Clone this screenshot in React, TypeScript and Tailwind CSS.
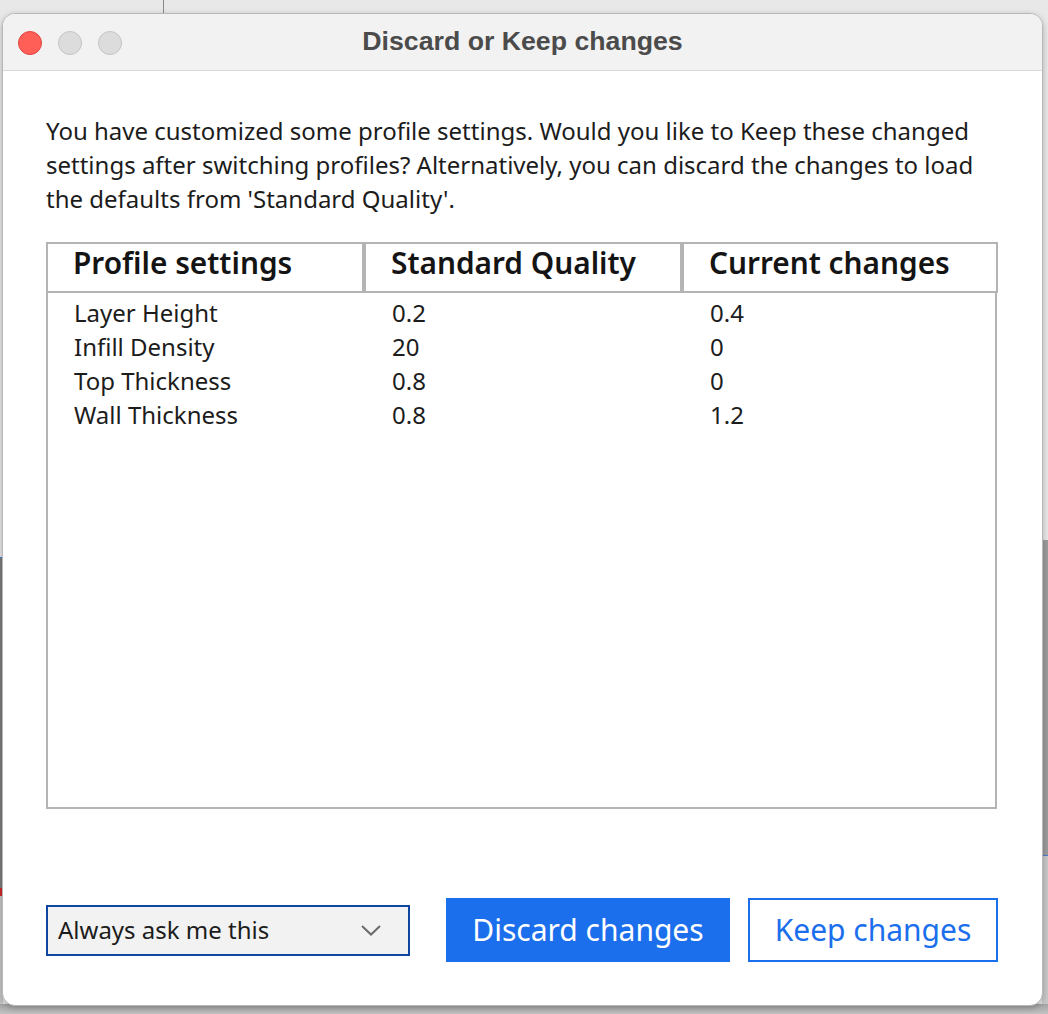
import React from "react";

const rows = [
  ["Layer Height", "0.2", "0.4"],
  ["Infill Density", "20", "0"],
  ["Top Thickness", "0.8", "0"],
  ["Wall Thickness", "0.8", "1.2"],
];

export default function App() {
  return (
    <div className="relative w-[1048px] h-[1014px] overflow-hidden bg-[#e8e8e8] font-['Noto_Sans',sans-serif]">
      {/* desktop behind the dialog */}
      <div className="absolute left-[163px] top-0 h-[14px] w-px bg-[#8a8a8a]" />
      <div className="absolute left-0 top-[558px] h-[330px] w-[3px] bg-[#7c7c7c]" />
      <div className="absolute left-0 top-[557px] h-px w-[3px] bg-[#3b78d8]" />
      <div className="absolute left-0 top-[888px] h-[8px] w-[3px] bg-[#d0282b]" />
      <div className="absolute left-0 top-[896px] h-[118px] w-[3px] bg-[#c4c4c4]" />
      <div className="absolute right-0 top-[540px] h-[315px] w-[6px] bg-[#9c9c9c]" />
      <div className="absolute right-0 top-[855px] h-px w-[6px] bg-[#4a7fd0]" />
      <div className="absolute right-0 top-[856px] h-[158px] w-[6px] bg-[#c8c8c8]" />
      <div className="absolute left-0 bottom-0 h-[10px] w-full bg-gradient-to-b from-[#a4a4a4] to-[#c2c2c2]" />

      {/* dialog window */}
      <div className="relative ml-[2px] mt-[13px] flex h-[993px] w-[1041px] flex-col overflow-hidden rounded-[13px] border border-[#b8b8b8] bg-white shadow-[0_2px_6px_rgba(0,0,0,0.25)]">
        {/* title bar */}
        <div className="grid h-[57px] shrink-0 grid-cols-[1fr_auto_1fr] items-center border-b border-[#d9d9d9] bg-[#f2f2f2]">
          <div className="flex items-center gap-[16px] pl-[15px] pt-[1px]">
            <span className="h-[24px] w-[24px] rounded-full border border-[#e0443e] bg-[#ff5f57]" />
            <span className="h-[24px] w-[24px] rounded-full border border-[#c4c4c4] bg-[#dcdcdc]" />
            <span className="h-[24px] w-[24px] rounded-full border border-[#c4c4c4] bg-[#dcdcdc]" />
          </div>
          <div className="pb-[1px] font-['Liberation_Sans',sans-serif] text-[26.7px] font-bold leading-none text-[#4b4b4b]">
            Discard or Keep changes
          </div>
          <div />
        </div>

        {/* body */}
        <div className="flex flex-1 flex-col pl-[43px] pr-[44px] pt-[43px]">
          <p className="w-[940px] text-[24px] leading-[34px] text-[#1c1c1c]">
            You have customized some profile settings. Would you like to Keep these changed settings after switching
            profiles? Alternatively, you can discard the changes to load the defaults from 'Standard Quality'.
          </p>

          {/* table */}
          <div className="mt-[26px] w-[952px]">
            <div className="grid h-[51px] grid-cols-[318px_318px_316px]">
              {["Profile settings", "Standard Quality", "Current changes"].map((h) => (
                <div
                  key={h}
                  className="flex items-center border-2 border-[#b4b4b4] pb-[9px] pl-[25px] text-[29.8px] font-semibold leading-none text-[#141414]"
                >
                  {h}
                </div>
              ))}
            </div>
            <div className="h-[516px] w-[951px] border-2 border-t-0 border-[#b4b4b4] pt-[3px]">
              {rows.map((r) => (
                <div key={r[0]} className="grid grid-cols-[318px_318px_1fr] text-[24px] leading-[34px] text-[#1c1c1c]">
                  <div className="pl-[26px]">{r[0]}</div>
                  <div className="pl-[26px]">{r[1]}</div>
                  <div className="pl-[26px]">{r[2]}</div>
                </div>
              ))}
            </div>
          </div>

          {/* footer */}
          <div className="mt-[89px] flex w-[952px] items-center">
            <div className="flex h-[51px] w-[364px] items-center justify-between border-2 border-[#0f47a0] bg-[#f2f2f2] pl-[10px] pr-[27px]">
              <span className="text-[24px] leading-none text-[#1c1c1c]">Always ask me this</span>
              <svg width="20" height="11" viewBox="0 0 20 11" fill="none">
                <polyline points="1,1 10,9.5 19,1" stroke="#6a6a6a" strokeWidth="2" />
              </svg>
            </div>
            <button className="ml-[36px] flex h-[64px] w-[284px] items-center justify-center bg-[#1b6fec] text-[30px] leading-none text-white">
              Discard changes
            </button>
            <button className="ml-[18px] flex h-[64px] w-[250px] items-center justify-center border-2 border-[#1b6fec] bg-white text-[30px] leading-none text-[#1b6fec]">
              Keep changes
            </button>
          </div>
        </div>
      </div>
    </div>
  );
}
